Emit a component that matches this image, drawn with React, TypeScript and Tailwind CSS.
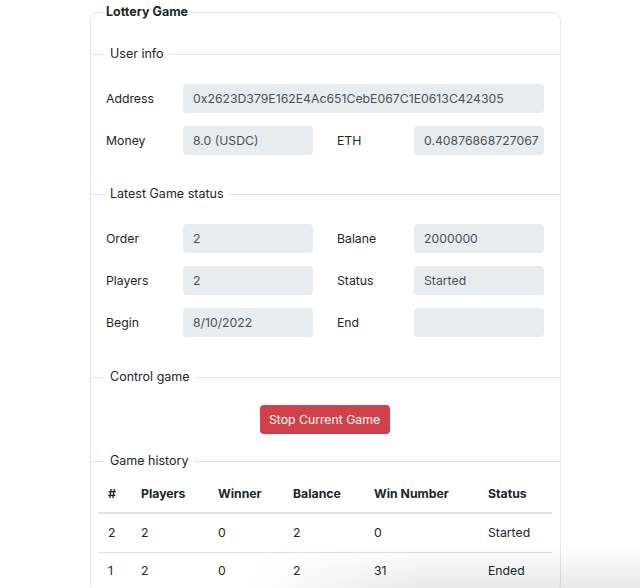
import React from "react";

function Box({ value, wide }: { value: string; wide?: boolean }) {
  return (
    <div
      className={
        wide
          ? "flex h-[29px] w-[361px] items-center overflow-hidden whitespace-nowrap rounded-[4px] bg-[#e9ecef] px-[10px] pt-[2px] text-[#495057]"
          : "flex h-[29px] w-[130px] items-center overflow-hidden whitespace-nowrap rounded-[4px] bg-[#e9ecef] px-[10px] pt-[2px] text-[#495057]"
      }
    >
      {value}
    </div>
  );
}

function Row({
  l1,
  v1,
  l2,
  v2,
}: {
  l1: string;
  v1: string;
  l2: string;
  v2: string;
}) {
  return (
    <div className="flex items-center">
      <div className="w-[77px] pt-[2px]">{l1}</div>
      <Box value={v1} />
      <div className="ml-[24px] w-[77px] pt-[2px]">{l2}</div>
      <Box value={v2} />
    </div>
  );
}

function Legend({ children }: { children: React.ReactNode }) {
  return (
    <legend className="ml-[14px] px-[5px] text-[12.5px] leading-[18px] text-[#212529]">
      {children}
    </legend>
  );
}

export default function App() {
  const history = [
    ["2", "2", "0", "2", "0", "Started"],
    ["1", "2", "0", "2", "31", "Ended"],
  ];
  return (
    <div className="relative h-[588px] w-[640px] overflow-hidden bg-white font-[Inter,'Noto_Sans',sans-serif] text-[12.25px] text-[#212529]">
      <fieldset className="ml-[90px] mt-[4px] w-[471px] rounded-[8px] border border-[#e7e7e7]">
        <legend className="ml-[13px] px-[2px] text-[12.5px] font-bold leading-[16px] text-[#212529]">
          Lottery Game
        </legend>

        <fieldset className="mt-[25px] border-t border-[#e3e3e3]">
          <Legend>User info</Legend>
          <div className="flex flex-col gap-[13px] pl-[15px] pt-[21px]">
            <div className="flex items-center">
              <div className="w-[77px] pt-[2px]">Address</div>
              <Box value="0x2623D379E162E4Ac651CebE067C1E0613C424305" wide />
            </div>
            <Row l1="Money" v1="8.0 (USDC)" l2="ETH" v2="0.40876868727067" />
          </div>
        </fieldset>

        <fieldset className="mt-[30px] border-t border-[#e3e3e3]">
          <Legend>Latest Game status</Legend>
          <div className="flex flex-col gap-[13px] pl-[15px] pt-[21px]">
            <Row l1="Order" v1="2" l2="Balane" v2="2000000" />
            <Row l1="Players" v1="2" l2="Status" v2="Started" />
            <Row l1="Begin" v1="8/10/2022" l2="End" v2="" />
          </div>
        </fieldset>

        <fieldset className="mt-[31px] border-t border-[#e3e3e3]">
          <Legend>Control game</Legend>
          <div className="flex justify-center pt-[19px]">
            <button className="ml-[-2px] h-[29px] w-[130px] rounded-[4px] bg-[#cf4249] pt-[2px] text-[12.25px] text-white">
              Stop Current Game
            </button>
          </div>
        </fieldset>

        <fieldset className="mt-[18px] border-t border-[#e3e3e3]">
          <Legend>Game history</Legend>
          <div className="pl-[7px] pt-[5px]">
            <table className="w-[454px] table-fixed border-collapse text-left">
              <colgroup>
                <col className="w-[33px]" />
                <col className="w-[77px]" />
                <col className="w-[75px]" />
                <col className="w-[81px]" />
                <col className="w-[114px]" />
                <col className="w-[74px]" />
              </colgroup>
              <thead>
                <tr className="h-[38px] border-b-2 border-[#dee2e6]">
                  {["#", "Players", "Winner", "Balance", "Win Number", "Status"].map(
                    (h) => (
                      <th key={h} className="px-[10px] pt-[2px] font-bold">
                        {h}
                      </th>
                    )
                  )}
                </tr>
              </thead>
              <tbody>
                {history.map((r, i) => (
                  <tr key={i} className="h-[39px] border-b border-[#dee2e6]">
                    {r.map((c, j) => (
                      <td key={j} className="px-[10px]">
                        {c}
                      </td>
                    ))}
                  </tr>
                ))}
              </tbody>
            </table>
          </div>
        </fieldset>
      </fieldset>
      <div className="pointer-events-none absolute left-[250px] top-[545px] h-[43px] w-[390px] bg-[linear-gradient(to_bottom,rgba(0,0,0,0),rgba(0,0,0,0.09))] [mask-image:linear-gradient(to_right,transparent,black_45%)]" />
    </div>
  );
}
